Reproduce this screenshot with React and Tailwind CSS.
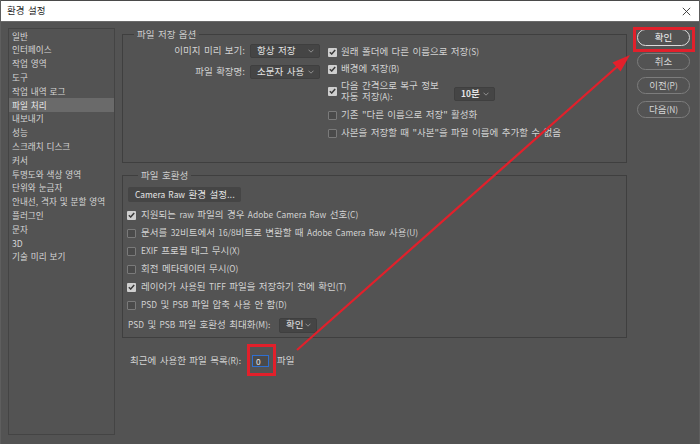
import React from "react";

const sidebarItems = [
  "일반",
  "인터페이스",
  "작업 영역",
  "도구",
  "작업 내역 로그",
  "파일 처리",
  "내보내기",
  "성능",
  "스크래치 디스크",
  "커서",
  "투명도와 색상 영역",
  "단위와 눈금자",
  "안내선, 격자 및 분할 영역",
  "플러그인",
  "문자",
  "3D",
  "기술 미리 보기",
];

function L({ children }) {
  return <span className="text-[8.4px]">{children}</span>;
}

function Check({ on }) {
  if (on) {
    return (
      <span className="w-[9px] h-[9px] shrink-0 rounded-[1px] bg-[#cfcfcf] flex items-center justify-center">
        <svg width="7" height="6" viewBox="0 0 7 6">
          <path d="M0.8 3.2 L2.7 5 L6.2 0.9" fill="none" stroke="#3a3a3a" strokeWidth="1.5" />
        </svg>
      </span>
    );
  }
  return <span className="w-[9px] h-[9px] shrink-0 rounded-[1px] bg-[#4a4a4a] border border-[#7a7a7a]" />;
}

function Chevron() {
  return (
    <svg width="6" height="4" viewBox="0 0 6 4" className="shrink-0">
      <path d="M0.5 0.7 L3 3.2 L5.5 0.7" fill="none" stroke="#9a9a9a" strokeWidth="0.9" />
    </svg>
  );
}

function Dropdown({ children, w, h = "h-[14px]" }) {
  return (
    <div className={`${w} ${h} shrink-0 bg-[#454545] border border-[#3f3f3f] rounded-[2px] flex items-center justify-between pl-[6px] pr-[5px]`}>
      <span className="text-[#e4e4e4] leading-none whitespace-nowrap">{children}</span>
      <Chevron />
    </div>
  );
}

function Row({ on, children, gap = "gap-[5px]", h = "h-[18px]", extra = "" }) {
  return (
    <div className={`flex items-center ${gap} ${h} ${extra}`}>
      <Check on={on} />
      <span className="leading-none whitespace-nowrap">{children}</span>
    </div>
  );
}

function Btn({ children, primary }) {
  return (
    <div
      className={`w-[53px] h-[17px] rounded-full border flex items-center justify-center leading-none whitespace-nowrap ${
        primary ? "border-[#dcdcdc] text-[#f2f2f2]" : "border-[#7c7c7c] text-[#d6d6d6]"
      }`}
    >
      {children}
    </div>
  );
}

export default function App() {
  return (
    <div className="relative w-[700px] h-[444px] overflow-hidden bg-[#535353] font-['Noto_Sans_CJK_KR','Noto_Sans',sans-serif] text-[#d2d2d2] text-[9.5px] [word-spacing:1.3px] border-x border-[#5e5e5e]">
      {/* Title bar */}
      <div className="h-[22px] bg-white border-t border-[#4a4a4a] border-b border-b-[#6a6a6a] flex items-center justify-between pl-[6px] pr-[8px]">
        <span className="text-[#1e1e1e] text-[9.5px] leading-none">환경 설정</span>
        <svg width="9" height="9" viewBox="0 0 9 9">
          <path d="M0.8 0.8 L8.2 8.2 M8.2 0.8 L0.8 8.2" stroke="#333" strokeWidth="0.9" />
        </svg>
      </div>

      <div className="flex h-[422px] pl-[7px] pt-[6px] pb-[9px]">
        {/* Sidebar */}
        <div className="w-[107px] h-full border border-[#444444] flex flex-col [word-spacing:1px]">
          {sidebarItems.map((t) => (
            <div
              key={t}
              className={`h-[13.8px] flex items-center pl-[3px] text-[8.6px] leading-none whitespace-nowrap text-[#d6d6d6] ${
                t === "파일 처리" ? "bg-[#6a6a6a] text-[#ececec]" : ""
              }`}
            >
              {t}
            </div>
          ))}
        </div>

        {/* Main */}
        <div className="w-[505px] ml-[7px] flex flex-col">
          <fieldset className="border border-[#3f3f3f] pb-[21px]">
            <legend className="ml-[11px] px-[3px] leading-[12px] text-[#cdcdcd]">파일 저장 옵션</legend>
            <div className="flex pt-[4px]">
              <div className="w-[197px] flex flex-col items-end gap-[7px]">
                <div className="flex items-center gap-[5px] h-[14px]">
                  <span className="leading-none whitespace-nowrap">이미지 미리 보기:</span>
                  <Dropdown w="w-[70px]">항상 저장</Dropdown>
                </div>
                <div className="flex items-center gap-[5px] h-[14px]">
                  <span className="leading-none whitespace-nowrap">파일 확장명:</span>
                  <Dropdown w="w-[70px]">소문자 사용</Dropdown>
                </div>
              </div>
              <div className="ml-[8px] flex flex-col">
                <Row on gap="gap-[4px]" h="h-[16px]">원래 폴더에 다른 이름으로 저장<L>(S)</L></Row>
                <Row on gap="gap-[4px]" h="h-[16px]" extra="mt-[1px]">배경에 저장<L>(B)</L></Row>
                <div className="flex items-center gap-[4px] h-[24px] mt-[2px]">
                  <Check on />
                  <div className="w-[109px] leading-[11px] flex flex-col whitespace-nowrap">
                    <span>다음 간격으로 복구 정보</span>
                    <span>자동 저장<L>(A):</L></span>
                  </div>
                  <div className="mt-[6px]">
                    <Dropdown w="w-[41px]"><span className="font-semibold"><L>10</L>분</span></Dropdown>
                  </div>
                </div>
                <Row on={false} gap="gap-[4px]" h="h-[16px]" extra="mt-[4px]">기존 "다른 이름으로 저장" 활성화</Row>
                <Row on={false} gap="gap-[4px]" h="h-[16px]" extra="mt-[2px]">사본을 저장할 때 "사본"을 파일 이름에 추가할 수 없음</Row>
              </div>
            </div>
          </fieldset>

          <fieldset className="border border-[#3f3f3f] mt-[6px] pl-[4px] pt-[6px] pb-[3px]">
            <legend className="ml-[11px] px-[3px] leading-[12px] text-[#cdcdcd]">파일 호환성</legend>
            <div className="ml-[1px] w-[113px] h-[15px] bg-[#454545] rounded-[2px] flex items-center pl-[7px] text-[#e6e6e6] leading-none whitespace-nowrap">
              <L>Camera Raw</L>&nbsp;환경 설정...
            </div>
            <div className="mt-[4px] flex flex-col">
              <Row on>지원되는 <L>raw</L> 파일의 경우 <L>Adobe Camera Raw</L> 선호<L>(C)</L></Row>
              <Row on={false}>문서를 <L>32</L>비트에서 <L>16/8</L>비트로 변환할 때 <L>Adobe Camera Raw</L> 사용<L>(U)</L></Row>
              <Row on={false}><L>EXIF</L> 프로필 태그 무시<L>(X)</L></Row>
              <Row on={false}>회전 메타데이터 무시<L>(O)</L></Row>
              <Row on>레이어가 사용된 <L>TIFF</L> 파일을 저장하기 전에 확인<L>(T)</L></Row>
              <Row on={false}><L>PSD</L> 및 <L>PSB</L> 파일 압축 사용 안 함<L>(D)</L></Row>
              <div className="flex items-center h-[18px] mt-[2px] pl-[1px]">
                <span className="w-[151px] shrink-0 leading-none whitespace-nowrap"><L>PSD</L> 및 <L>PSB</L> 파일 호환성 최대화<L>(M):</L></span>
                <Dropdown w="w-[38px]" h="h-[15px]">확인</Dropdown>
              </div>
            </div>
          </fieldset>

          <div className="flex items-center h-[12px] mt-[17px] pl-[8px]">
            <span className="w-[122px] shrink-0 leading-none whitespace-nowrap">최근에 사용한 파일 목록<L>(R):</L></span>
            <div className="relative">
              <div className="w-[17px] h-[12px] border border-[#2f6fd0] bg-[#4a4a4a] flex items-center pl-[3px] text-[#e6e6e6] leading-none">
                <L>0</L>
              </div>
              <div className="absolute left-[-5px] right-[-7px] top-[-11px] bottom-[-9px] border-[3px] border-[#e2202b]" />
            </div>
            <span className="ml-[8px] leading-none">파일</span>
          </div>
        </div>

        {/* Buttons */}
        <div className="ml-[10px] pt-[1px] flex flex-col gap-[7px]">
          <div className="relative">
            <Btn primary>확인</Btn>
            <div className="absolute left-[-4px] right-[-5px] top-[-2px] bottom-[-6px] border-[3px] border-[#e2202b]" />
          </div>
          <Btn>취소</Btn>
          <Btn>이전<L>(P)</L></Btn>
          <Btn>다음<L>(N)</L></Btn>
        </div>
      </div>

      {/* Annotation arrow */}
      <svg className="absolute left-0 top-0 pointer-events-none" width="700" height="444" viewBox="0 0 700 444">
        <line x1="296" y1="350" x2="618" y2="65" stroke="#e2202b" strokeWidth="2.2" />
        <polygon points="629,55 611.5,62.4 619.5,71.4" fill="#e2202b" />
      </svg>
    </div>
  );
}
